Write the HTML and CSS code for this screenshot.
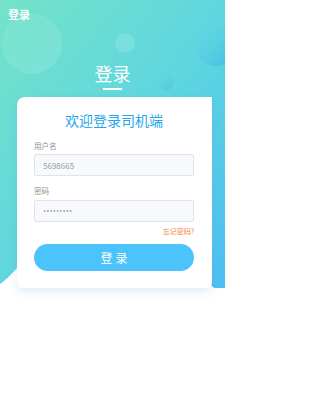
FILE: index.html
```html
<!DOCTYPE html>
<html lang="zh">
<head>
<meta charset="utf-8">
<title>登录</title>
<link rel="stylesheet" href="styles.css">
</head>
<body>
<div class="page">
  <svg class="bg" width="225" height="400" viewBox="0 0 225 400" aria-hidden="true">
    <defs>
      <linearGradient id="g" x1="0" y1="0" x2="1" y2="1">
        <stop offset="0" stop-color="#74e3c8"/>
        <stop offset="0.55" stop-color="#5dd5e0"/>
        <stop offset="1" stop-color="#4dbef2"/>
      </linearGradient>
      <radialGradient id="c1" cx="0.3" cy="0.3" r="0.8">
        <stop offset="0" stop-color="#ffffff" stop-opacity="0.05"/>
        <stop offset="1" stop-color="#ffffff" stop-opacity="0.12"/>
      </radialGradient>
      <linearGradient id="c2" x1="0" y1="0" x2="1" y2="1">
        <stop offset="0" stop-color="#5ed6e4" stop-opacity="0"/>
        <stop offset="1" stop-color="#3fb2e6" stop-opacity="0.75"/>
      </linearGradient>
    </defs>
    <rect x="0" y="0" width="225" height="288" fill="url(#g)"/>
    <circle cx="32" cy="44" r="30" fill="url(#c1)"/>
    <circle cx="125" cy="43" r="10" fill="#ffffff" fill-opacity="0.14"/>
    <circle cx="216" cy="46" r="20" fill="url(#c2)"/>
    <circle cx="166" cy="82" r="8" fill="url(#c2)" fill-opacity="0.6"/>
    <path d="M0,284 C8,279 14,270 24,262 L200,258 C207,262 211,272 211,282 C211,286 213,288 216,288 L225,288 L225,400 L0,400 Z" fill="#ffffff"/>
  </svg>

  <div class="topbar">登录</div>
  <h1 class="hero-title">登录</h1>
  <div class="hero-line"></div>

  <div class="card">
    <h2 class="card-title">欢迎登录司机端</h2>
    <div class="field">
      <label class="field-label">用户名</label>
      <div class="input">5698665</div>
    </div>
    <div class="field field-pass">
      <label class="field-label">密码</label>
      <div class="input input-pass">•••••••••</div>
    </div>
    <div class="forgot">忘记密码?</div>
    <button class="login-btn">登录</button>
  </div>
</div>
</body>
</html>
```

FILE: styles.css
```css
* { box-sizing: border-box; }
html, body { margin: 0; padding: 0; background: #ffffff; }
.page {
  position: relative;
  width: 225px;
  height: 400px;
  overflow: hidden;
  font-family: "Noto Sans CJK SC", "Noto Sans", sans-serif;
}
.bg { position: absolute; left: 0; top: 0; }
.topbar {
  position: relative;
  padding: 7px 8px 0;
  font-size: 11px;
  line-height: 14px;
  font-weight: 700;
  color: #ffffff;
}
.hero-title {
  position: relative;
  margin: 42px 0 0;
  text-align: center;
  font-size: 18px;
  line-height: 20px;
  font-weight: 400;
  color: #ffffff;
}
.hero-line {
  position: relative;
  width: 19px;
  height: 2px;
  margin: 5px auto 0;
  background: #ffffff;
}
.card {
  position: relative;
  width: 195px;
  margin: 7px 0 0 17px;
  padding: 15px 18px 17px 17px;
  background: #ffffff;
  border-radius: 8px 0 6px 6px;
  box-shadow: 0 4px 10px rgba(90, 140, 220, 0.16);
  display: flex;
  flex-direction: column;
}
.card-title {
  margin: 0;
  text-align: center;
  font-size: 14px;
  line-height: 16px;
  font-weight: 400;
  color: #1fa6ec;
}
.field { display: flex; flex-direction: column; gap: 3px; margin-top: 13px; }
.field-pass { margin-top: 10px; gap: 4px; }
.field-label {
  font-size: 7.5px;
  line-height: 10px;
  color: #8f8f8f;
}
.input {
  height: 22px;
  padding-left: 8px;
  display: flex;
  align-items: center;
  background: #f7f9fc;
  border: 1px solid #dde3ea;
  border-radius: 2px;
  font-size: 8px;
  color: #9a9a9a;
}
.input-pass {
  font-family: "DejaVu Sans", sans-serif;
  font-size: 5.5px;
  letter-spacing: 0;
  color: #7a7a7a;
}
.forgot {
  margin-top: 5px;
  text-align: right;
  font-size: 7px;
  line-height: 9px;
  color: #f27f3e;
}
.login-btn {
  margin-top: 8px;
  height: 27px;
  border: none;
  border-radius: 14px;
  background: #4cc4fb;
  color: #ffffff;
  font-family: inherit;
  font-size: 12px;
  letter-spacing: 3px;
  text-indent: 3px;
  padding: 0;
}
```
